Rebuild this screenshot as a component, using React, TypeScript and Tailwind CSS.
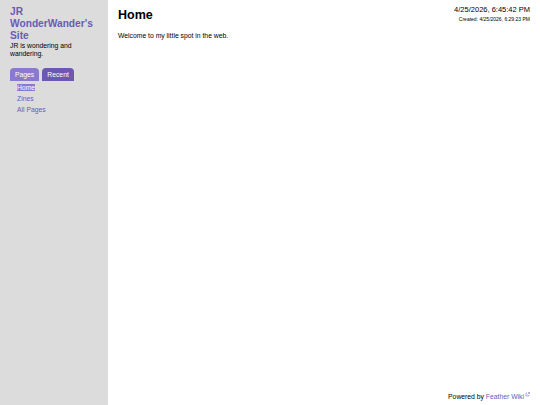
export default function App() {
  return (
    <div className="flex h-[405px] w-[540px] bg-white font-['Liberation_Sans',Arial,sans-serif] text-black">
      <aside className="flex w-[108px] shrink-0 flex-col bg-[#dcdcdc] px-[10px] pt-[6px]">
        <h1 className="text-[10.2px] font-bold leading-[12px] text-[#6b5bb5]">JR WonderWander's Site</h1>
        <p className="text-[6.8px] leading-[8px]">JR is wondering and wandering.</p>
        <nav className="mt-[10px]">
          <div className="flex gap-[3px]">
            <button className="rounded-t-[4px] bg-[#8a79cf] px-[5px] pb-[1px] pt-[2px] text-[6.8px] leading-[10px] text-white">Pages</button>
            <button className="rounded-t-[4px] bg-[#6c58b0] px-[5px] pb-[1px] pt-[2px] text-[6.8px] leading-[10px] text-white">Recent</button>
          </div>
          <ul className="mt-[2px] flex flex-col gap-[2px] pl-[7px] text-[6.8px] leading-[9px] text-[#6b5bb5]">
            <li><span className="bg-[#8a79cf] text-white">Home</span></li>
            <li>Zines</li>
            <li>All Pages</li>
          </ul>
        </nav>
      </aside>
      <main className="flex min-w-0 flex-1 flex-col px-[10px] pt-[5px]">
        <header className="flex items-start justify-between">
          <h2 className="mt-[2px] text-[12.5px] font-bold leading-[16px]">Home</h2>
          <div className="text-right">
            <div className="text-[7.5px] leading-[10px]">4/25/2026, 6:45:42 PM</div>
            <div className="text-[5px] leading-[8px]">Created: 4/25/2026, 6:29:23 PM</div>
          </div>
        </header>
        <p className="mt-[9px] text-[6.8px] leading-[8px]">Welcome to my little spot in the web.</p>
        <footer className="mt-auto pb-[4px] text-right text-[6.8px] leading-[9px]">
          Powered by <span className="text-[#6b5bb5]">Feather Wiki</span>
          <svg viewBox="0 0 10 10" className="ml-[1px] inline-block h-[5px] w-[5px] align-top text-[#8a79cf]" fill="none" stroke="currentColor" strokeWidth="1.2">
            <path d="M4 2H2v6h6V6M6 1h3v3M9 1L5 5" />
          </svg>
        </footer>
      </main>
    </div>
  );
}
